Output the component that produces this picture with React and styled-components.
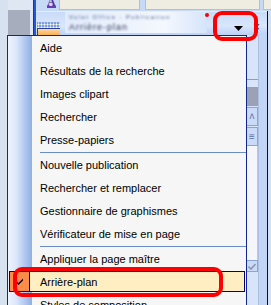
import React from "react";
import styled, { createGlobalStyle } from "styled-components";

const GlobalStyle = createGlobalStyle`
  html, body {
    margin: 0;
    padding: 0;
    background: #d9e3f3;
  }
  body {
    font-family: "Liberation Sans", Arial, sans-serif;
    font-size: 11px;
  }
`;

const MENU_ITEMS = [
  { label: "Aide" },
  { label: "Résultats de la recherche" },
  { label: "Images clipart" },
  { label: "Rechercher" },
  { label: "Presse-papiers" },
  { separator: true },
  { label: "Nouvelle publication" },
  { label: "Rechercher et remplacer" },
  { label: "Gestionnaire de graphismes" },
  { label: "Vérificateur de mise en page" },
  { separator: true },
  { label: "Appliquer la page maître" },
  { label: "Arrière-plan", checked: true },
  { label: "Styles de composition" },
  { label: "Mise en forme" },
];

const CheckMark = () => (
  <svg width="7" height="7" viewBox="0 0 7 7">
    <path d="M0 2.5 L2.5 5 L7 0.5 L7 2.5 L2.5 7 L0 4.5 Z" fill="#000" />
  </svg>
);

const DownArrow = () => (
  <svg width="9" height="5" viewBox="0 0 9 5">
    <polygon points="0,0 9,0 4.5,5" fill="#000" />
  </svg>
);

const SmallCheck = () => (
  <svg width="8" height="7" viewBox="0 0 8 7">
    <path d="M0.5 3.5 L3 6 L7.5 1" stroke="#8c97b0" strokeWidth="1.6" fill="none" />
  </svg>
);

const App = () => {
  return (
    <>
      <GlobalStyle />
      <Frame>
        <LeftStrip>
          <Shade w={8} bg="#d8e1f0" />
          <Shade w={22} bg="linear-gradient(#dfe7f3 0 10px, #a6adbd 10px)" />
          <Shade w={3} bg="#e1e8f5" />
        </LeftStrip>
        <Divider />
        <Workspace>
          <TopBar>
            <Grip />
            <FontIcon>A</FontIcon>
            <Combo w={79} gap={3} />
            <Combo w={113} gap={5} />
            <Combo w={10} gap={3} />
          </TopBar>
          <Pane>
            <PaneMain>
              <PaneHeader>
                <Tab>
                  <TabGrip />
                  <TabIcon />
                </Tab>
                <BlurTitle>
                  <BlurLine small>Volet Office - Publication</BlurLine>
                  <BlurLine>Arrière-plan</BlurLine>
                </BlurTitle>
                <ArrowButton>
                  <DownArrow />
                </ArrowButton>
                <CloseButton>×</CloseButton>
              </PaneHeader>
              <PaneBody>
                <PaneContent />
                <SideColumn>
                  <SideRule />
                  <SideThumb />
                  <SideButton>˄</SideButton>
                  <SideButton>≡</SideButton>
                  <SideTrack />
                  <SideButton small>
                    <SmallCheck />
                  </SideButton>
                </SideColumn>
                <Rim />
              </PaneBody>
            </PaneMain>
            <BlackLine />
            <Shade w={3} bg="#d4e0f4" />
          </Pane>
        </Workspace>

        <Menu>
          {MENU_ITEMS.map((item, index) => {
            if (item.separator) return <Separator key={index} />;
            if (item.checked) {
              return (
                <ActiveItem key={index}>
                  <CheckCell>
                    <CheckMark />
                  </CheckCell>
                  <ActiveLabel>{item.label}</ActiveLabel>
                </ActiveItem>
              );
            }
            return <MenuItem key={index}>{item.label}</MenuItem>;
          })}
        </Menu>

        <RedDot />
        <RedMark left={213} top={11} w={45} h={30} />
        <RedMark left={13} top={267} w={210} h={30} />
      </Frame>
    </>
  );
};

export default App;

const Frame = styled.div`
  position: relative;
  width: 271px;
  height: 305px;
  overflow: hidden;
  display: flex;
  background: #d9e3f3;
`;

const LeftStrip = styled.div`
  display: flex;
  flex-shrink: 0;
`;

const Shade = styled.div`
  width: ${(p) => p.w}px;
  flex-shrink: 0;
  background: ${(p) => p.bg};
`;

const Divider = styled.div`
  width: 3px;
  flex-shrink: 0;
  background: #2458d8;
  border-left: 1px solid #123a9e;
  box-sizing: border-box;
`;

const Workspace = styled.div`
  flex: 1;
  display: flex;
  flex-direction: column;
  min-width: 0;
`;

const TopBar = styled.div`
  height: 11px;
  display: flex;
  align-items: flex-start;
  background: #c6d9f7;
  overflow: hidden;
  flex-shrink: 0;
`;

const Grip = styled.div`
  width: 4px;
  height: 7px;
  margin: 1px 6px 0 5px;
  background-image: radial-gradient(circle, #3a5fa8 0.8px, transparent 1px);
  background-size: 2px 2px;
`;

const FontIcon = styled.div`
  width: 14px;
  height: 9px;
  margin-top: -3px;
  font-family: "Liberation Serif", serif;
  font-weight: bold;
  font-size: 12px;
  line-height: 11px;
  color: #5b2aa0;
  text-align: center;
  border-bottom: 2px solid #6c3ab8;
`;

const Combo = styled.div`
  width: ${(p) => p.w}px;
  height: 9px;
  margin-left: ${(p) => p.gap}px;
  background: #efede2;
  border: 1px solid #b3bfd4;
  border-top: none;
  flex-shrink: 0;
`;

const Pane = styled.div`
  flex: 1;
  display: flex;
  min-height: 0;
`;

const PaneMain = styled.div`
  flex: 1;
  display: flex;
  flex-direction: column;
`;

const PaneHeader = styled.div`
  height: 24px;
  display: flex;
  align-items: flex-start;
  background: linear-gradient(#c9dbf8, #d9e6fb 60%, #bcd1f4);
  border-top: 1px solid #e6eefb;
  box-sizing: border-box;
  flex-shrink: 0;
`;

const Tab = styled.div`
  width: 23px;
  margin: 10px 0 0 1px;
  display: flex;
  flex-direction: column;
`;

const TabGrip = styled.div`
  height: 6px;
  background-color: #7d9fe0;
  background-image: radial-gradient(circle, #fff 0.9px, transparent 1.1px);
  background-size: 3px 3px;
  background-position: 3px 1px;
`;

const TabIcon = styled.div`
  height: 7px;
  background: linear-gradient(#ffd79a, #f7a94b);
  border-left: 1px solid #2b3f8f;
  border-top: 1px solid #2b3f8f;
`;

const BlurTitle = styled.div`
  width: 142px;
  height: 21px;
  margin-left: 5px;
  padding-left: 4px;
  box-sizing: border-box;
  background: linear-gradient(90deg, #e2ebfb, #f4f8fe 70%, #d6e4fa);
  display: flex;
  flex-direction: column;
  justify-content: center;
  gap: 1px;
  overflow: hidden;
`;

const BlurLine = styled.div`
  font-size: ${(p) => (p.small ? 6 : 9)}px;
  line-height: ${(p) => (p.small ? 7 : 10)}px;
  letter-spacing: ${(p) => (p.small ? 1.4 : 1)}px;
  color: ${(p) => (p.small ? "#4a5f94" : "#2e3858")};
  filter: blur(0.85px);
  white-space: nowrap;
`;

const ArrowButton = styled.div`
  margin: 14px 0 0 auto;
  display: flex;
`;

const CloseButton = styled.div`
  margin: 9px 6px 0 10px;
  width: 8px;
  font-size: 12px;
  line-height: 12px;
  color: #1d2b55;
`;

const PaneBody = styled.div`
  flex: 1;
  display: flex;
`;

const PaneContent = styled.div`
  flex: 1;
  background: #f6f6f6;
`;

const SideColumn = styled.div`
  width: 12px;
  display: flex;
  flex-direction: column;
  align-items: stretch;
  background: #d7e4fa;
  border-right: 1px solid #a9bfe6;
  box-sizing: border-box;
`;

const SideRule = styled.div`
  height: 1px;
  margin-top: 44px;
  background: #7f9fd6;
`;

const SideThumb = styled.div`
  height: 19px;
  margin-top: 7px;
  background: #9ba2b6;
  border: 1px solid #8aa2d0;
  border-left: none;
  box-sizing: border-box;
`;

const SideButton = styled.div`
  height: ${(p) => (p.small ? 12 : 19)}px;
  margin-top: ${(p) => (p.small ? 0 : 1)}px;
  &:first-of-type {
    margin-top: 31px;
  }
  display: flex;
  align-items: center;
  justify-content: center;
  font-size: 10px;
  color: #5b6f9c;
  background: #cbdaf6;
  border: 1px solid #8aa4d4;
  border-left: none;
  box-sizing: border-box;
`;

const SideTrack = styled.div`
  height: 114px;
  background: #f4f6fb;
  border-right: 1px solid #b8c8e6;
`;

const Rim = styled.div`
  width: 8px;
  background: #c3d5f5;
`;

const BlackLine = styled.div`
  width: 1px;
  background: #111;
`;

const Menu = styled.div`
  position: absolute;
  left: 7px;
  top: 35px;
  width: 240px;
  height: 300px;
  border: 1px solid #0a2a8e;
  box-sizing: border-box;
  background:
    linear-gradient(90deg, #eef3fd, #dbe7fb 35%, #8eafe6) 0 0 / 24px 100% no-repeat,
    #f6f6f6;
  display: flex;
  flex-direction: column;
`;

const MenuItem = styled.div`
  height: 23px;
  flex-shrink: 0;
  box-sizing: border-box;
  padding: 1px 0 0 32px;
  line-height: 22px;
  color: #000;
  white-space: nowrap;
`;

const Separator = styled.div`
  height: 2px;
  flex-shrink: 0;
  margin-left: 32px;
  box-sizing: border-box;
  border-bottom: 1px solid #6a8ccb;
`;

const ActiveItem = styled.div`
  height: 21px;
  flex-shrink: 0;
  margin: 1px;
  display: flex;
  box-sizing: border-box;
  border: 1px solid #000080;
  background: #ffeec2;
`;

const CheckCell = styled.div`
  width: 20px;
  display: flex;
  align-items: center;
  justify-content: center;
  background: #ff8a4a;
  border-right: 1px solid #000080;
  box-sizing: border-box;
`;

const ActiveLabel = styled.div`
  padding: 1px 0 0 10px;
  line-height: 18px;
  color: #000;
`;

const RedMark = styled.div`
  position: absolute;
  left: ${(p) => p.left}px;
  top: ${(p) => p.top}px;
  width: ${(p) => p.w}px;
  height: ${(p) => p.h}px;
  border: 4px solid #ff0000;
  border-radius: 9px;
  box-sizing: border-box;
`;

const RedDot = styled.div`
  position: absolute;
  left: 205px;
  top: 13px;
  width: 4px;
  height: 4px;
  border-radius: 2px;
  background: #ff0000;
`;
